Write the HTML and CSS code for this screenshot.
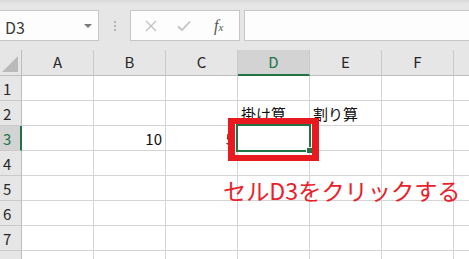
FILE: index.html
```html
<!DOCTYPE html>
<html lang="ja">
<head>
<meta charset="utf-8">
<link rel="stylesheet" href="styles.css">
</head>
<body>
<div class="bar">
  <div class="namebox"><span class="ref">D3</span><span class="caret"></span></div>
  <div class="grip"><i></i><i></i><i></i></div>
  <div class="fbtns">
    <svg class="ic" width="12" height="12" viewBox="0 0 12 12"><path d="M1 1L11 11M11 1L1 11" stroke="#c2c2c2" stroke-width="1.4" fill="none"/></svg>
    <svg class="ic" width="14" height="12" viewBox="0 0 14 12"><path d="M1 6.5L5 10L13 1.5" stroke="#c2c2c2" stroke-width="1.8" fill="none"/></svg>
    <span class="fx">f<small>x</small></span>
  </div>
  <div class="fbar"></div>
</div>
<div class="sheet">
  <div class="corner"><span class="tri"></span></div>
  <div class="ch">A</div><div class="ch">B</div><div class="ch">C</div><div class="ch ch-sel">D</div><div class="ch">E</div><div class="ch">F</div><div class="ch"></div>

  <div class="rh">1</div><div class="c"></div><div class="c"></div><div class="c"></div><div class="c"></div><div class="c"></div><div class="c"></div><div class="c"></div>
  <div class="rh">2</div><div class="c"></div><div class="c"></div><div class="c"></div><div class="c">掛け算</div><div class="c">割り算</div><div class="c"></div><div class="c"></div>
  <div class="rh rh-sel">3</div><div class="c"></div><div class="c num">10</div><div class="c num">5</div><div class="c sel"></div><div class="c"></div><div class="c"></div><div class="c"></div>
  <div class="rh">4</div><div class="c"></div><div class="c"></div><div class="c"></div><div class="c"></div><div class="c"></div><div class="c"></div><div class="c"></div>
  <div class="rh">5</div><div class="c"></div><div class="c"></div><div class="c"></div><div class="c"></div><div class="c"></div><div class="c"></div><div class="c"></div>
  <div class="rh">6</div><div class="c"></div><div class="c"></div><div class="c"></div><div class="c"></div><div class="c"></div><div class="c"></div><div class="c"></div>
  <div class="rh">7</div><div class="c"></div><div class="c"></div><div class="c"></div><div class="c"></div><div class="c"></div><div class="c"></div><div class="c"></div>
  <div class="rh">8</div><div class="c"></div><div class="c"></div><div class="c"></div><div class="c"></div><div class="c"></div><div class="c"></div><div class="c"></div>
</div>
<div class="callout-box"></div>
<div class="callout-text">セルD3をクリックする</div>
</body>
</html>
```
FILE: styles.css
```css
html, body {
  margin: 0;
  padding: 0;
  width: 469px;
  height: 259px;
  overflow: hidden;
  background: #e6e6e6;
  font-family: "Noto Sans CJK JP", "Noto Sans", sans-serif;
  position: relative;
}

.bar {
  display: flex;
  height: 50px;
  box-sizing: border-box;
  padding-top: 10px;
  background: linear-gradient(#d9d9d9 0, #e6e6e6 4px);
}

.namebox {
  width: 99px;
  height: 31px;
  box-sizing: border-box;
  background: #fdfdfd;
  border: 1px solid #c6c6c6;
  border-left: none;
  display: flex;
  align-items: center;
  justify-content: space-between;
  padding: 0 6px 0 5px;
}

.ref {
  font-size: 16px;
  color: #3a3a3a;
  line-height: 1;
  padding-top: 2px;
}

.caret {
  width: 0;
  height: 0;
  border-left: 4px solid transparent;
  border-right: 4px solid transparent;
  border-top: 4px solid #7a7a7a;
}

.grip {
  width: 31px;
  display: flex;
  flex-direction: column;
  align-items: center;
  justify-content: center;
  gap: 2px;
  height: 31px;
}

.grip i {
  display: block;
  width: 2px;
  height: 2px;
  background: #b4b4b4;
}

.fbtns {
  width: 110px;
  height: 31px;
  box-sizing: border-box;
  background: #fdfdfd;
  border: 1px solid #c6c6c6;
  display: flex;
  align-items: center;
  padding-left: 14px;
  gap: 20px;
}

.fx {
  font-family: "Liberation Serif", serif;
  font-style: italic;
  font-size: 16px;
  color: #555;
  margin-left: 3px;
}

.fx small {
  font-size: 11px;
}

.fbar {
  flex: 1;
  margin-left: 4px;
  height: 31px;
  box-sizing: border-box;
  background: #fdfdfd;
  border: 1px solid #c6c6c6;
  border-right: none;
}

.sheet {
  display: grid;
  grid-template-columns: 22px repeat(7, 72px);
  grid-template-rows: 26px;
  grid-auto-rows: 25px;
  width: 526px;
}

.sheet > div {
  box-sizing: border-box;
}

.corner {
  background: #e6e6e6;
  border-right: 1px solid #bdbdbd;
  border-bottom: 1px solid #bdbdbd;
  position: relative;
}

.tri {
  position: absolute;
  right: 3px;
  bottom: 3px;
  width: 0;
  height: 0;
  border-left: 16px solid transparent;
  border-bottom: 16px solid #bababa;
}

.ch {
  background: #e6e6e6;
  border-right: 1px solid #cacaca;
  border-bottom: 1px solid #bdbdbd;
  font-size: 15px;
  color: #262626;
  text-align: center;
  line-height: 24px;
}

.ch-sel {
  background: #d3d3d3;
  color: #217346;
  border-bottom: 2px solid #217346;
}

.rh {
  background: #e6e6e6;
  border-right: 1px solid #bdbdbd;
  border-bottom: 1px solid #cacaca;
  font-size: 15px;
  color: #262626;
  padding-left: 3px;
  line-height: 25px;
}

.rh-sel {
  background: #d3d3d3;
  color: #217346;
  border-right: 2px solid #217346;
}

.c {
  background: #fff;
  border-right: 1px solid #d4d4d4;
  border-bottom: 1px solid #d4d4d4;
  font-size: 15px;
  color: #111;
  display: flex;
  align-items: flex-end;
  padding: 0 3px 1px 3px;
  line-height: 20px;
  white-space: nowrap;
}

.num {
  justify-content: flex-end;
}

.sel {
  position: relative;
}

.sel::before {
  content: "";
  position: absolute;
  left: -2px;
  top: -2px;
  right: -2px;
  bottom: -2px;
  border: 2px solid #217346;
}

.sel::after {
  content: "";
  position: absolute;
  right: -3px;
  bottom: -3px;
  width: 5px;
  height: 5px;
  background: #217346;
  border-left: 1px solid #fff;
  border-top: 1px solid #fff;
}

.callout-box {
  position: absolute;
  left: 228px;
  top: 118px;
  width: 91px;
  height: 43px;
  box-sizing: border-box;
  border: solid #e8191f;
  border-width: 6px 7px;
}

.callout-text {
  position: absolute;
  left: 223px;
  top: 173px;
  font-size: 23.2px;
  line-height: 34px;
  color: #e8212a;
  white-space: nowrap;
}
```
